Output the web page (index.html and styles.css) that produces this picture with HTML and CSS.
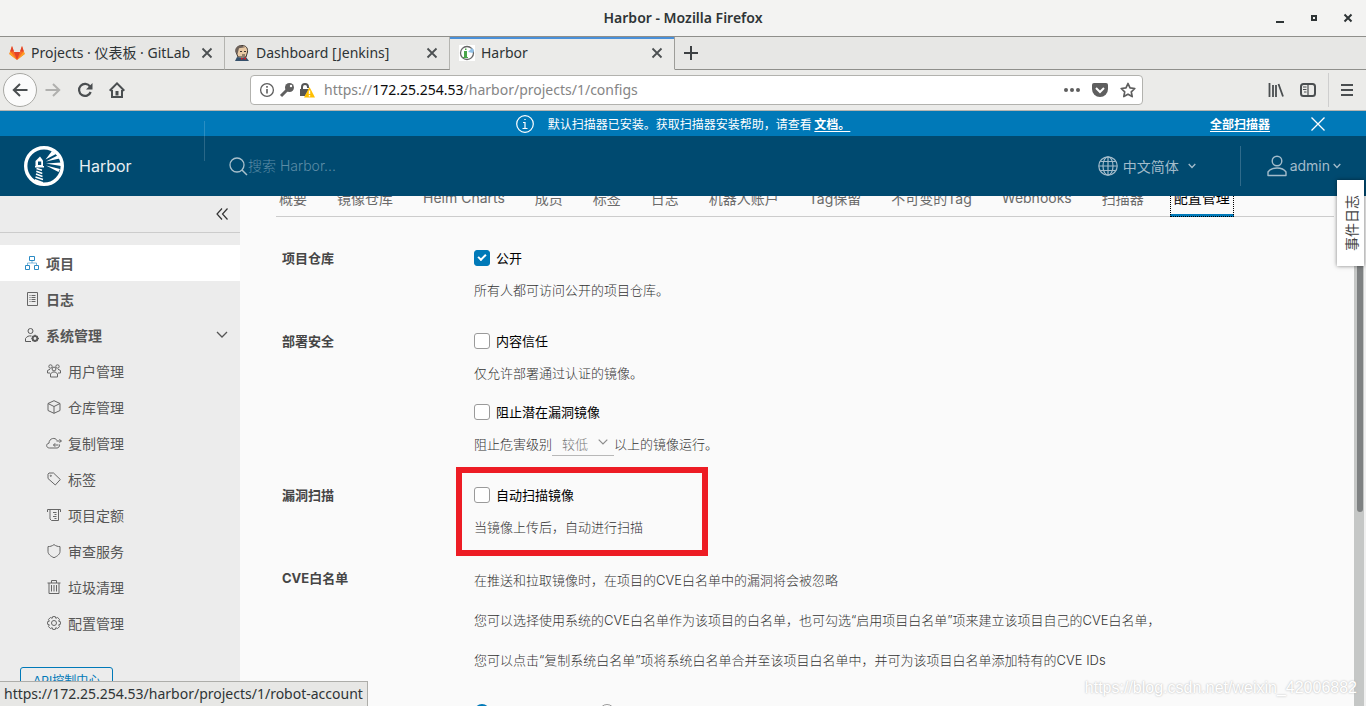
FILE: index.html
```html
<!DOCTYPE html>
<html lang="zh-CN">
<head>
<meta charset="utf-8">
<title>Harbor</title>
<link rel="stylesheet" href="styles.css">
</head>
<body>
<div class="window">
  <div class="titlebar">
    <span class="window-title">Harbor - Mozilla Firefox</span>
    <div class="window-controls">
      <button type="button" aria-label="Minimize"><svg width="10" height="10" viewBox="0 0 10 10"><path d="M1 9h8" stroke="#2e3436" stroke-width="2"/></svg></button>
      <button type="button" aria-label="Maximize"><svg width="10" height="10" viewBox="0 0 10 10"><rect x="3" y="3" width="4" height="4" fill="none" stroke="#2e3436" stroke-width="2"/></svg></button>
      <button type="button" aria-label="Close"><svg width="10" height="10" viewBox="0 0 10 10"><path d="M1.500 1.500l7 7M8.500 1.500l-7 7" stroke="#2e3436" stroke-width="2"/></svg></button>
    </div>
  </div>

  <div class="tabstrip">
    <div class="browser-tab">
      <svg width="16" height="16" viewBox="0 0 16 16"><path d="M3 1L.3 9 8 15l7.700-6L13 1l-2 6H5z" fill="#fc6d26"/><path d="M5 7h6l-3 8z" fill="#e24329"/><path d="M3 1L1.200 6.500H5zM13 1l-2 5.500h3.800z" fill="#e24329"/><path d="M1.200 6.500L.3 9 8 15zM14.800 6.500L15.700 9 8 15z" fill="#fca326"/></svg>
      <span>Projects · 仪表板 · GitLab</span>
      <button type="button" aria-label="Close tab"><svg width="12" height="12" viewBox="0 0 12 12"><path d="M1.500 1.500l9 9M10.500 1.500l-9 9" stroke="#4c5052" stroke-width="1.800"/></svg></button>
    </div>
    <div class="browser-tab">
      <svg width="16" height="16" viewBox="0 0 16 16"><path d="M2 7C1 3 4 .5 8 .5s6 2.500 5.500 6.500L12 12H4z" fill="#e8c9a4" stroke="#3d3530"/><path d="M2 8C1 3 4 0 8 .7l3 1.500-6 1L3.500 9z" fill="#6e625a"/><path d="M6 6.500h2M10 6.500h2M8 10h3" stroke="#3d3530"/><path d="M1 16l2-4 5 1 4-1 3 4z" fill="#35506b"/><path d="M7 12.500l5 2.500v-3l-5 3z" fill="#c8222a"/></svg>
      <span>Dashboard [Jenkins]</span>
      <button type="button" aria-label="Close tab"><svg width="12" height="12" viewBox="0 0 12 12"><path d="M1.500 1.500l9 9M10.500 1.500l-9 9" stroke="#4c5052" stroke-width="1.800"/></svg></button>
    </div>
    <div class="browser-tab current">
      <svg width="16" height="16" viewBox="0 0 16 16"><path d="M0 0h16v16H0z" fill="#fff"/><circle cx="8" cy="8" r="6.500" fill="none" stroke="#666" stroke-width="1.300"/><path d="M5 6h3v7H5zM6 3.500h1.500V5H6zM4 12h5v1H4z" fill="#4aa54a"/><path d="M9 7l4-4 2 2-1 3z" fill="#8fbfe6"/></svg>
      <span>Harbor</span>
      <button type="button" aria-label="Close tab"><svg width="12" height="12" viewBox="0 0 12 12"><path d="M1.500 1.500l9 9M10.500 1.500l-9 9" stroke="#4c5052" stroke-width="1.800"/></svg></button>
    </div>
    <button type="button" class="new-tab" aria-label="New tab"><svg width="14" height="14" viewBox="0 0 14 14"><path d="M7 0v14M0 7h14" stroke="#3c4042" stroke-width="2"/></svg></button>
  </div>

  <div class="toolbar">
    <button type="button" class="back" aria-label="Back"><svg width="16" height="16" viewBox="0 0 16 16"><path d="M15.500 8H1.500M8 2L1.800 8 8 14" fill="none" stroke="#4a4e50" stroke-width="2"/></svg></button>
    <button type="button" aria-label="Forward"><svg width="16" height="16" viewBox="0 0 16 16"><path d="M.5 8h14M8 2l6.200 6L8 14" fill="none" stroke="#b0b0ae" stroke-width="2"/></svg></button>
    <button type="button" aria-label="Reload"><svg width="16" height="16" viewBox="0 0 16 16"><path d="M13 4.500A6 6 0 1 0 13.700 10" fill="none" stroke="#4a4e50" stroke-width="2.200"/><path d="M15.500 1v6.500H9z" fill="#4a4e50"/></svg></button>
    <button type="button" aria-label="Home"><svg width="16" height="16" viewBox="0 0 16 16"><path d="M.7 8.700L8 1.400l7.300 7.300M3 8v7h10V8" fill="none" stroke="#4a4e50" stroke-width="2"/><path d="M6.500 9h3v4.500h-3z" fill="#4a4e50"/></svg></button>
    <div class="urlbar">
      <svg width="16" height="16" viewBox="0 0 16 16"><circle cx="8" cy="8" r="6.400" fill="none" stroke="#5e5e5e" stroke-width="1.300"/><path d="M8 7v4.500M8 4v1.700" stroke="#5e5e5e" stroke-width="1.600"/></svg>
      <svg width="16" height="16" viewBox="0 0 16 16"><circle cx="10.500" cy="5.500" r="4.500" fill="#606060"/><path d="M9 7L2 14" stroke="#606060" stroke-width="3"/><circle cx="12" cy="4" r="1.200" fill="#fff"/></svg>
      <svg width="16" height="16" viewBox="0 0 16 16"><path d="M3 8V5a3 3 0 0 1 6 0v1" fill="none" stroke="#555" stroke-width="2"/><path d="M1 7h9l-4 7H1z" fill="#555"/><path d="M10.500 5L16 15.500H5z" fill="#ffbf00"/><path d="M10.500 8.500v3.500M10.500 13v1.500" stroke="#fff" stroke-width="1.400"/></svg>
      <span class="url">https://<b>172.25.254.53</b>/harbor/projects/1/configs</span>
      <span class="url-actions">
        <button type="button" aria-label="Page actions"><svg width="16" height="16" viewBox="0 0 16 16"><g fill="#5e5e5e"><circle cx="2" cy="8" r="2"/><circle cx="8" cy="8" r="2"/><circle cx="14" cy="8" r="2"/></g></svg></button>
        <button type="button" aria-label="Pocket"><svg width="16" height="16" viewBox="0 0 16 16"><path d="M2 1h12q2 0 2 2v4a8 8 0 0 1-16 0V3q0-2 2-2z" fill="#5e5e5e"/><path d="M4 6l4 4 4-4" fill="none" stroke="#fff" stroke-width="2"/></svg></button>
        <button type="button" aria-label="Bookmark"><svg width="16" height="16" viewBox="0 0 16 16"><path d="M8 1.500l2 4.400 4.800.6-3.500 3.300.9 4.800L8 12.200l-4.200 2.400.9-4.800L1.200 6.500 6 5.900z" fill="none" stroke="#5e5e5e" stroke-width="1.700" stroke-linejoin="round"/></svg></button>
      </span>
    </div>
    <div class="toolbar-end">
      <button type="button" aria-label="Library"><svg width="16" height="16" viewBox="0 0 16 16"><path d="M1.500 1v14M5 3v12M8 3v12M10.500 2l4.500 12.500" stroke="#4a4e50" stroke-width="1.800"/></svg></button>
      <button type="button" aria-label="Sidebars"><svg width="16" height="16" viewBox="0 0 16 16"><rect x="1" y="2" width="14" height="12" rx="2.500" fill="none" stroke="#4a4e50" stroke-width="2"/><path d="M8 2v12M3 5h3.500M3 7.500h3.500M4 10h2.500" stroke="#4a4e50" stroke-width="1.200"/></svg></button>
      <span class="rule"></span>
      <button type="button" aria-label="Menu"><svg width="12" height="12" viewBox="0 0 12 12"><path d="M0 1h12M0 6h12M0 11h12" stroke="#4a4e50" stroke-width="2"/></svg></button>
    </div>
  </div>

  <div class="page">
    <div class="alert">
      <div class="alert-text">
        <svg width="18" height="18" viewBox="0 0 18 18"><circle cx="9" cy="9" r="8.300" fill="none" stroke="#fff" stroke-width="1.200"/><path d="M7 7.500h2v6M6.500 13.500h5M8.300 4.500h1.400" fill="none" stroke="#fff" stroke-width="1.200"/></svg>
        <span>默认扫描器已安装。获取扫描器安装帮助，请查看 <a href="#">文档。</a></span>
      </div>
      <div class="alert-end">
        <a href="#">全部扫描器</a>
        <button type="button" aria-label="关闭"><svg width="14" height="14" viewBox="0 0 14 14"><path d="M.5 .5l13 13M13.500 .5l-13 13" stroke="#fff" stroke-width="1.300"/></svg></button>
      </div>
    </div>

    <header class="header">
      <a class="brand" href="#">
        <svg width="40" height="40" viewBox="0 0 40 40"><circle cx="20" cy="20" r="18.300" fill="none" stroke="#fff" stroke-width="3.400"/><path d="M11.500 15l4.500-4.500 3 4V20h-7.500z" fill="#fff"/><path d="M14 15.500h3.200V19H14z" fill="#004a70"/><path d="M11 20h9v1.500h-9z" fill="#fff"/><path d="M12.500 22.500l5.500 1.800M12.300 25.300l6 2.200M12 28l6.500 2.500M11.500 31l7.500 2.500" stroke="#fff" stroke-width="1.500"/><path d="M11 33l8 3v3h-5l-4-3z" fill="#fff"/><path d="M21.500 13.500L28 5l4 3zM22 15.500l11.500-6 2 3zM22 17.500l15-1v3.500zM22 19.500L36 23l-1.500 3z" fill="#fff"/></svg>
        <span>Harbor</span>
      </a>
      <label class="search">
        <svg width="19" height="19" viewBox="0 0 19 19"><circle cx="8" cy="8" r="7" fill="none" stroke="#a9c0cc" stroke-width="1.300"/><path d="M13 13l5 5" stroke="#a9c0cc" stroke-width="1.500"/></svg>
        <input type="text" placeholder="搜索 Harbor..." aria-label="搜索">
      </label>
      <div class="header-end">
        <button type="button" class="lang">
          <svg width="20" height="20" viewBox="0 0 20 20" fill="none" stroke="#a3bccb" stroke-width="1.200"><circle cx="10" cy="10" r="9.200"/><ellipse cx="10" cy="10" rx="5" ry="9.200"/><path d="M10 1v18M1 10h18M2.500 5.500h15M2.500 14.500h15"/></svg>
          <span>中文简体</span>
          <svg width="8" height="6" viewBox="0 0 8 6"><path d="M.7 1L4 4.500 7.300 1" fill="none" stroke="#a3bccb" stroke-width="1.300"/></svg>
        </button>
        <button type="button" class="user">
          <svg width="20" height="22" viewBox="0 0 20 22" fill="none" stroke="#a3bccb" stroke-width="1.400"><circle cx="10" cy="6" r="4.800"/><path d="M1 20.500v-3.500c2-3 5.500-4 9-4s7 1 9 4v3.500z" stroke-linejoin="round"/></svg>
          <span>admin</span>
          <svg width="8" height="6" viewBox="0 0 8 6"><path d="M.7 1L4 4.500 7.300 1" fill="none" stroke="#a3bccb" stroke-width="1.300"/></svg>
        </button>
      </div>
    </header>

    <div class="body">
      <aside class="sidebar">
        <div class="collapse"><button type="button" aria-label="收起"><svg width="12" height="12" viewBox="0 0 12 12"><path d="M6 .5L1 6l5 5.500M11.500 .5l-5 5.500 5 5.500" fill="none" stroke="#333" stroke-width="1.200"/></svg></button></div>
        <nav class="nav">
          <a class="top active" href="#"><svg width="14" height="14" viewBox="0 0 14 14" fill="none" stroke="#2a8ac4"><path d="M4.500 .5h5v4h-5zM.5 9.500h4v4h-4zM9.500 9.500h4v4h-4z"/><path d="M7 4.500V7M2.500 9V7h9v2" stroke-opacity=".6"/></svg>项目</a>
          <a class="top" href="#"><svg width="14" height="14" viewBox="0 0 14 14" fill="none" stroke="#666"><path d="M2.500 .5h10v13h-10z"/><path d="M4.500 3.500h1M6.500 3.500h4M4.500 5.500h1M6.500 5.500h4M4.500 7.500h1M6.500 7.500h4M4.500 9.500h1M6.500 9.500h4"/></svg>日志</a>
          <a class="top" href="#"><svg width="14" height="14" viewBox="0 0 14 14" fill="none" stroke="#5a5a5a"><circle cx="5.500" cy="3" r="2.500"/><path d="M6 13.500H.5v-3C2 8.500 3.500 7.500 6.500 8"/><circle cx="10" cy="10.500" r="2.300" stroke-width="1.800"/><path d="M10 6.800v1.500M10 12.700v1.500M6.300 10.500h1.500M12.200 10.500h1.800M7.500 8l1 1M11.500 12l1 1M12.500 8l-1 1M8.500 12l-1 1" stroke-width="1.500"/></svg>系统管理<svg class="caret" width="12" height="8" viewBox="0 0 12 8"><path d="M1 1l5 5 5-5" fill="none" stroke="#555" stroke-width="1.300"/></svg></a>
          <a class="sub" href="#"><svg width="14" height="14" viewBox="0 0 14 14" fill="none" stroke="#666"><circle cx="7" cy="5" r="1.900"/><circle cx="3.500" cy="2.500" r="1.700"/><circle cx="10.500" cy="2.500" r="1.700"/><path d="M3.500 13v-3C4.500 8.500 5.500 8 7 8s2.500.5 3.500 2v3zM.5 9V6.500L3 5.300M.5 9H3M13.500 9V6.500L11 5.300M13.500 9H11"/></svg>用户管理</a>
          <a class="sub" href="#"><svg width="14" height="14" viewBox="0 0 14 14" fill="none" stroke="#666"><path d="M7 .7l6 2.800v7L7 13.300 1 10.500v-7zM1 3.500l6 3 6-3M7 6.500v6.800"/></svg>仓库管理</a>
          <a class="sub wide" href="#"><svg width="16" height="14" viewBox="0 0 16 14" fill="none" stroke="#666"><path d="M13.500 8.500c.3 2-1 3.500-2.500 3.500H3.500C-.2 12-.2 7.500 3 7.200 3 2 9.500 1 11 4.500M15.500 5h-5M13.500 3.200L15.300 5l-1.800 1.800M7.500 9h5M9.200 7.200L7.500 9l1.700 1.800"/></svg>复制管理</a>
          <a class="sub" href="#"><svg width="14" height="14" viewBox="0 0 14 14" fill="none" stroke="#666"><path d="M1 2.200L2 1h4.500l6.800 6.500-5 5.500L1 6.500z"/><circle cx="3.800" cy="3.800" r=".6"/></svg>标签</a>
          <a class="sub" href="#"><svg width="14" height="14" viewBox="0 0 14 14" fill="none" stroke="#666"><path d="M.5 4V1.500h13V4M3 1.500v9.500l1.500 1.500h7V1.500M6 4.500h3.500M7.500 6.500h2M6 8.500h3.500M7.500 10.500h2"/></svg>项目定额</a>
          <a class="sub" href="#"><svg width="14" height="14" viewBox="0 0 14 14" fill="none" stroke="#666"><path d="M7 .6c2 1.500 4 2 6 2v4.900c0 2.500-2.500 4.700-6 6.200-3.500-1.500-6-3.700-6-6.200V2.600c2 0 4-.5 6-2z"/></svg>审查服务</a>
          <a class="sub" href="#"><svg width="14" height="14" viewBox="0 0 14 14" fill="none" stroke="#666"><path d="M.5 3h13M4.500 3V.5h5V3M2 3v10.500h10V3M4.500 5v6.500M7 5v6.500M9.500 5v6.500"/></svg>垃圾清理</a>
          <a class="sub" href="#"><svg width="14" height="14" viewBox="0 0 14 14" fill="none" stroke="#666"><circle cx="7" cy="7" r="2.500"/><path d="M5.700 .6h2.600l.5 1.700 1.800-.8 1.900 1.900-.8 1.800 1.700.5v2.600l-1.700.5.8 1.800-1.900 1.900-1.800-.8-.5 1.700H5.700l-.5-1.700-1.800.8-1.900-1.900.8-1.800-1.700-.5V5.700l1.700-.5-.8-1.800 1.900-1.900 1.800.8z"/></svg>配置管理</a>
        </nav>
        <a class="api" href="#">API控制中心</a>
      </aside>

      <main class="content">
        <div class="tabs" role="tablist">
          <button type="button" role="tab">概要</button>
          <button type="button" role="tab">镜像仓库</button>
          <button type="button" role="tab">Helm Charts</button>
          <button type="button" role="tab">成员</button>
          <button type="button" role="tab">标签</button>
          <button type="button" role="tab">日志</button>
          <button type="button" role="tab">机器人账户</button>
          <button type="button" role="tab">Tag保留</button>
          <button type="button" role="tab">不可变的Tag</button>
          <button type="button" role="tab">Webhooks</button>
          <button type="button" role="tab">扫描器</button>
          <button type="button" role="tab" class="selected" aria-selected="true">配置管理</button>
        </div>

        <form class="form">
          <section class="row">
            <h2>项目仓库</h2>
            <div class="controls">
              <div class="control">
                <label class="check"><input type="checkbox" checked>公开</label>
                <p>所有人都可访问公开的项目仓库。</p>
              </div>
            </div>
          </section>
          <section class="row">
            <h2>部署安全</h2>
            <div class="controls">
              <div class="control">
                <label class="check"><input type="checkbox">内容信任</label>
                <p>仅允许部署通过认证的镜像。</p>
              </div>
              <div class="control">
                <label class="check"><input type="checkbox">阻止潜在漏洞镜像</label>
                <div class="severity">
                  <label for="severity">阻止危害级别</label>
                  <span class="select"><select id="severity" disabled><option>较低</option></select><svg width="10" height="6" viewBox="0 0 10 6"><path d="M.7 .7L5 5 9.300 .7" fill="none" stroke="#8c8c8c" stroke-width="1.200"/></svg></span>
                  <span>以上的镜像运行。</span>
                </div>
              </div>
            </div>
          </section>
          <section class="row">
            <h2>漏洞扫描</h2>
            <div class="controls marked">
              <div class="control">
                <label class="check"><input type="checkbox">自动扫描镜像</label>
                <p>当镜像上传后，自动进行扫描</p>
              </div>
            </div>
          </section>
          <section class="row">
            <h2>CVE白名单</h2>
            <div class="controls notes">
              <p>在推送和拉取镜像时，在项目的CVE白名单中的漏洞将会被忽略</p>
              <p>您可以选择使用系统的CVE白名单作为该项目的白名单，也可勾选“启用项目白名单”项来建立该项目自己的CVE白名单，</p>
              <p>您可以点击“复制系统白名单”项将系统白名单合并至该项目白名单中，并可为该项目白名单添加特有的CVE IDs</p>
              <div class="radios">
                <input type="radio" name="allowlist" aria-label="系统白名单" checked>
                <input type="radio" name="allowlist" aria-label="项目白名单">
              </div>
            </div>
          </section>
        </form>
      </main>
      <div class="scrollbar"><div class="thumb"></div></div>
    </div>
    <button type="button" class="events"><span>事件日志</span></button>
  </div>

  <div class="status">https://172.25.254.53/harbor/projects/1/robot-account</div>
  <div class="watermark">https://blog.csdn.net/weixin_42006882</div>
</div>
</body>
</html>
```

FILE: styles.css
```css
*, *::before, *::after { box-sizing: border-box; }

body {
  margin: 0;
  font-family: Inter, "Noto Sans CJK SC", sans-serif;
  font-size: 13px;
  color: #565656;
}

button {
  display: inline-flex;
  align-items: center;
  justify-content: center;
  padding: 0;
  border: 0;
  background: none;
  font: inherit;
  color: inherit;
}

a { color: inherit; text-decoration: none; }
p, h2 { margin: 0; }
svg { flex: none; }

.window {
  position: relative;
  display: flex;
  flex-direction: column;
  height: 100vh;
  overflow: hidden;
}

/* Browser chrome */
.titlebar, .tabstrip, .toolbar, .status {
  flex: none;
  font-family: "Noto Sans", "Noto Sans CJK SC", sans-serif;
  font-size: 14px;
  line-height: 18px;
  color: #2e3436;
}

.titlebar {
  display: grid;
  grid-template-columns: 1fr auto 1fr;
  align-items: center;
  height: 37px;
  padding: 0 13px;
  background: #f3f3f2;
  border-bottom: 1px solid #8f8f8b;
}
.window-title { grid-column: 2; font-weight: 600; }
.window-controls { display: flex; justify-content: flex-end; gap: 24px; }

.tabstrip { display: flex; height: 33px; background: #e7e7e5; }
.browser-tab {
  display: flex;
  align-items: center;
  gap: 6px;
  width: 225px;
  padding: 0 11px 0 9px;
  border-right: 1px solid #b4b4b0;
  border-bottom: 1px solid #8f8f8b;
}
.browser-tab span { flex: 1; white-space: nowrap; }
.browser-tab.current {
  background: #ebebe9;
  border-color: #9d9d99;
  border-bottom-color: #ebebe9;
  box-shadow: inset 0 2px #4a90d9;
}
.new-tab { flex: 1; justify-content: flex-start; padding-left: 9px; border-bottom: 1px solid #8f8f8b; }

.toolbar {
  display: flex;
  align-items: center;
  gap: 16px;
  height: 41px;
  padding: 0 13px 0 3px;
  background: #ebebe9;
  border-bottom: 1px solid #b5b5b1;
}
.back {
  width: 34px;
  height: 34px;
  margin-right: -8px;
  background: #fbfbfb;
  border: 1px solid #a8a8a4;
  border-radius: 50%;
}
.urlbar {
  display: flex;
  flex: 1;
  align-items: center;
  gap: 4px;
  height: 30px;
  margin: 0 109px;
  padding: 0 6px 0 8px;
  background: #fff;
  border: 1px solid #b2b2ae;
  border-radius: 4px;
}
.url { flex: 1; padding-left: 5px; color: #858585; }
.url b { font-weight: 400; color: #0c0c0d; }
.url-actions { display: flex; gap: 12px; }
.toolbar-end { display: flex; align-items: center; gap: 16px; }
.rule { width: 1px; height: 34px; margin: 0 -4px; background: #cecece; }

/* Application */
.page {
  position: relative;
  display: flex;
  flex: 1;
  flex-direction: column;
  min-height: 0;
  background: #fafafa;
}

.alert {
  display: grid;
  flex: none;
  grid-template-columns: 1fr auto 1fr;
  align-items: center;
  height: 25px;
  padding: 0 41px;
  background: #0079b8;
  font-family: "Noto Sans CJK SC", sans-serif;
  font-size: 12px;
  line-height: 16px;
  color: #fff;
}
.alert a { font-weight: 700; text-decoration: underline; text-underline-offset: 2px; }
.alert-text { display: flex; grid-column: 2; align-items: center; gap: 14px; }
.alert-end { display: flex; align-items: center; justify-content: flex-end; gap: 41px; }

.header {
  position: relative;
  display: flex;
  flex: none;
  align-items: center;
  height: 60px;
  padding: 0 25px 0 24px;
  background: #004a70;
  color: #a3bccb;
  font-size: 14px;
  line-height: 20px;
}
.brand { display: flex; align-items: center; gap: 15px; width: 205px; font-size: 16px; color: #e8eef2; }
.header::before {
  content: "";
  position: absolute;
  top: -15px;
  left: 204px;
  width: 1px;
  height: 40px;
  background: rgba(255, 255, 255, 0.16);
}
.search { display: flex; flex: 1; align-items: center; }
.search input { flex: 1; padding: 0; border: 0; outline: 0; background: none; font: inherit; font-weight: 300; color: #fff; }
.search input::placeholder { color: #5c8ca6; opacity: 1; }
.header-end { display: flex; align-items: center; gap: 44px; }
.lang { gap: 5px; font-family: "Noto Sans CJK SC", sans-serif; }
.lang svg:last-child { margin-left: 4px; }
.user { gap: 3px; height: 40px; padding-left: 26px; border-left: 1px solid #2f6b8b; }

.body { display: flex; flex: 1; min-height: 0; }

.sidebar { flex: none; width: 240px; overflow: hidden; background: #ececec; }
.collapse {
  display: flex;
  align-items: center;
  justify-content: flex-end;
  height: 37px;
  padding-right: 12px;
  border-bottom: 1px solid #ccc;
}
.nav {
  display: flex;
  flex-direction: column;
  padding-top: 12px;
  font-family: "Noto Sans CJK SC", sans-serif;
  font-size: 14px;
  line-height: 18px;
}
.nav a { display: flex; align-items: center; gap: 7px; height: 36px; padding: 0 12px 0 25px; }
.nav .top { font-weight: 700; }
.nav .active { background: #fff; }
.nav .sub { padding-left: 47px; }
.nav .wide { gap: 6px; padding-left: 46px; }
.caret { margin-left: auto; }
.api {
  display: inline-flex;
  align-items: center;
  height: 24px;
  margin: 26px 20px;
  padding: 0 12px;
  border: 1px solid #0079b8;
  border-radius: 3px;
  font-size: 12px;
  color: #0079b8;
}

.content { flex: 1; min-width: 0; overflow: hidden; padding: 0 20px 0 36px; }
.tabs {
  display: flex;
  align-items: flex-end;
  gap: 22px;
  height: 21px;
  overflow: hidden;
  box-shadow: inset 0 -1px #ccc;
  font-size: 14px;
  white-space: nowrap;
}
.tabs button { height: 37px; padding: 0 4px 2px; color: #6a6a6a; }
.tabs button:first-child { padding-left: 3px; }
.tabs .selected {
  padding-bottom: 0;
  color: #000;
  border-bottom: 3px solid #0079b8;
  outline: 1px dotted #000;
  outline-offset: -1px;
}

.form {
  display: flex;
  flex-direction: column;
  gap: 27px;
  padding: 29px 0 0 6px;
  font-weight: 300;
  line-height: 24px;
  color: #333;
}
.row { display: grid; grid-template-columns: 192px 1fr; }
.row h2 { font-size: 13px; font-weight: 700; color: #454545; }
.controls { display: flex; flex-direction: column; gap: 15px; }
.control { display: flex; flex-direction: column; gap: 8px; }
.check { display: flex; align-items: center; gap: 6px; font-weight: 400; color: #000; }
.check input {
  position: relative;
  width: 16px;
  height: 16px;
  margin: 0;
  appearance: none;
  background: #fff;
  border: 1px solid #9a9a9a;
  border-radius: 3px;
}
.check input:checked { background: #0079b8; border-color: #0079b8; }
.check input:checked::after {
  content: "";
  position: absolute;
  top: 3px;
  left: 3px;
  width: 8px;
  height: 5px;
  border-bottom: 2px solid #fff;
  border-left: 2px solid #fff;
  transform: rotate(-45deg);
}

.severity { display: flex; height: 24px; }
.select { position: relative; width: 62px; border-bottom: 1px solid #b8b8b8; }
.select select {
  width: 100%;
  height: 24px;
  padding: 0 0 0 10px;
  appearance: none;
  border: 0;
  background: none;
  font: inherit;
  color: #777;
  opacity: 1;
}
.select svg { position: absolute; top: 7px; right: 6px; }

.marked { position: relative; }
.marked::after {
  content: "";
  position: absolute;
  top: -16px;
  left: -18px;
  width: 252px;
  height: 89px;
  border: 6px solid #ed1c24;
  pointer-events: none;
}

.notes { gap: 16px; padding-top: 2px; white-space: nowrap; }
.radios { display: flex; gap: 109px; padding-top: 16px; }
.radios input {
  width: 16px;
  height: 16px;
  margin: 0;
  appearance: none;
  background: #fff;
  border: 1px solid #9a9a9a;
  border-radius: 50%;
}
.radios input:checked { background: #fff; border: 5px solid #0079b8; }

.scrollbar {
  display: flex;
  flex: none;
  align-items: flex-start;
  justify-content: flex-end;
  width: 12px;
  padding-right: 1px;
  background: #c5c7c6;
  border-right: 2px solid #f0f0f0;
}
.thumb { width: 6px; height: 62%; background: #7e8182; border-radius: 0 0 3px 3px; }

.events {
  position: absolute;
  top: 69px;
  right: 2px;
  width: 27px;
  height: 86px;
  background: #fff;
  box-shadow: 0 0 4px rgba(0, 0, 0, 0.5);
  font-size: 14px;
  color: #444;
}
.events span { writing-mode: vertical-rl; text-orientation: sideways; transform: rotate(180deg); }

.status {
  position: absolute;
  bottom: 0;
  left: 0;
  padding: 0 4px;
  background: #e7e7e5;
  border: 1px solid #adada9;
  border-width: 1px 1px 0 0;
  line-height: 24px;
}
.watermark {
  position: absolute;
  right: 9px;
  bottom: 9px;
  font-family: "Liberation Sans", sans-serif;
  font-size: 16px;
  color: #fff;
  text-shadow: 0 0 2px #aaa;
}
```
